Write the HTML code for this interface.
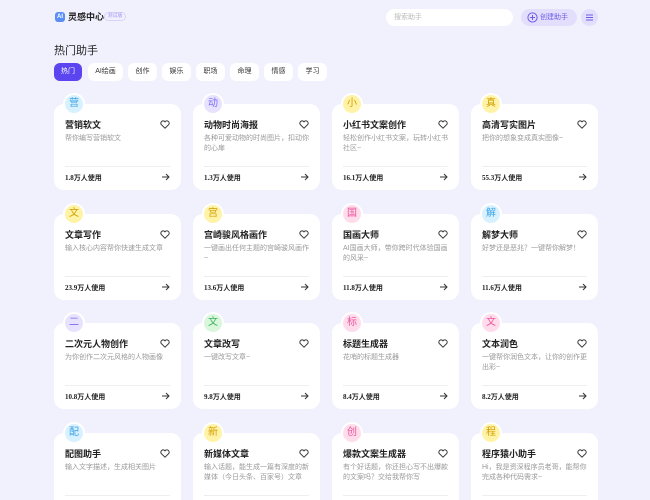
<!DOCTYPE html>
<html><head><meta charset="utf-8"><style>
*{margin:0;padding:0;box-sizing:border-box}
html{width:650px;height:500px;overflow:hidden}
body{width:650px;height:500px;overflow:hidden;background:#f1f0fd;font-family:"Liberation Sans","Noto Sans CJK SC",sans-serif;position:relative;color:#222}
.abs{position:absolute}
.tab{position:absolute;top:63px;height:18px;border-radius:6px;background:#fff;font-size:7px;line-height:18px;text-align:center;color:#333}
.card{position:absolute;width:127px;height:86px;background:#fff;border-radius:10px}
.ic{position:absolute;left:9px;top:-11px;width:22px;height:22px;border-radius:50%;border:2px solid #fff;font-size:10px;line-height:18px;text-align:center}
.t{position:absolute;left:11px;top:15px;font-size:9px;line-height:12px;font-weight:bold;color:#222}
.d{position:absolute;left:11px;top:30px;width:107px;font-size:7px;line-height:10px;color:#999}
.hr{position:absolute;left:11px;right:11px;top:62px;border-top:1px solid #eee}
.u{position:absolute;left:11px;top:69px;font-size:7px;font-weight:bold;color:#222;font-family:"Liberation Serif","Noto Sans CJK SC",serif}
.hrt{position:absolute;right:11px;top:16px}
.ar{position:absolute;right:11px;top:69px}
.b{background:#d8f1ff;color:#3ba3e6}.p{background:#e7e3ff;color:#7a6bf0}.y{background:#fff3a8;color:#d29c00}.k{background:#ffdcec;color:#e8559a}.g{background:#daf6dd;color:#3bb35a}
</style></head><body>
<div class="abs" style="left:55px;top:12px;width:10px;height:10px;border-radius:3px;background:#5b8df6;color:#fff;font-size:6px;font-weight:bold;line-height:10px;text-align:center">AI</div>
<div class="abs" style="left:68px;top:12px;font-size:9px;line-height:11px;font-weight:bold;color:#222">灵感中心</div>
<div class="abs" style="left:104px;top:12px;width:22px;height:9px;border:1px solid #d8d3fb;border-radius:5px;font-size:5px;line-height:7px;text-align:center;color:#a79cf0">测试版</div>
<div class="abs" style="left:386px;top:9px;width:127px;height:17px;border-radius:9px;background:#fff;font-size:7px;line-height:17px;padding-left:8px;color:#bbb">搜索助手</div>
<div class="abs" style="left:521px;top:9px;width:56px;height:17px;border-radius:9px;background:#e2defc;font-size:7px;line-height:17px;padding-left:19px;color:#6c5ce7">创建助手</div>
<svg class="abs" style="left:527px;top:12px" width="11" height="11" viewBox="0 0 11 11"><circle cx="5.5" cy="5.5" r="4.6" fill="none" stroke="#6c5ce7" stroke-width="1"/><path d="M5.5 3v5M3 5.5h5" stroke="#6c5ce7" stroke-width="1"/></svg>
<div class="abs" style="left:581px;top:9px;width:17px;height:17px;border-radius:50%;background:#e2defc"></div>
<svg class="abs" style="left:585px;top:13px" width="9" height="9" viewBox="0 0 9 9"><path d="M1 2h7M1 4.5h7M1 7h7" stroke="#6c5ce7" stroke-width="1"/></svg>
<div class="abs" style="left:54px;top:44px;font-size:11px;line-height:14px;color:#222">热门助手</div>
<div class="tab" style="left:54px;width:28px;background:#5b45f0;color:#fff">热门</div>
<div class="tab" style="left:88px;width:35px">AI绘画</div>
<div class="tab" style="left:128px;width:29px">创作</div>
<div class="tab" style="left:162px;width:29px">娱乐</div>
<div class="tab" style="left:196px;width:29px">职场</div>
<div class="tab" style="left:230px;width:29px">命理</div>
<div class="tab" style="left:264px;width:29px">情感</div>
<div class="tab" style="left:298px;width:29px">学习</div>
<div id="c"></div>
<script>
var D=[["营","b","营销软文","帮你编写营销软文","1.8万人使用"],["动","p","动物时尚海报","各种可爱动物的时尚图片，扣动你的心扉","1.3万人使用"],["小","y","小红书文案创作","轻松创作小红书文案，玩转小红书社区~","16.1万人使用"],["真","y","高清写实图片","把你的想象变成真实图像~","55.3万人使用"],
["文","y","文章写作","输入核心内容帮你快速生成文章","23.9万人使用"],["宫","y","宫崎骏风格画作","一键画出任何主题的宫崎骏风画作~","13.6万人使用"],["国","k","国画大师","AI国画大师，带你跨时代体验国画的风采~","11.8万人使用"],["解","b","解梦大师","好梦还是恶兆？一键帮你解梦！","11.6万人使用"],
["二","p","二次元人物创作","为你创作二次元风格的人物画像","10.8万人使用"],["文","g","文章改写","一键改写文章~","9.8万人使用"],["标","k","标题生成器","花哨的标题生成器","8.4万人使用"],["文","k","文本润色","一键帮你润色文本，让你的创作更出彩~","8.2万人使用"],
["配","b","配图助手","输入文字描述，生成相关图片",""],["新","y","新媒体文章","输入话题，能生成一篇有深度的新媒体（今日头条、百家号）文章",""],["创","k","爆款文案生成器","有个好话题，你还担心写不出爆款的文案吗？交给我帮你写",""],["程","y","程序猿小助手","Hi，我是资深程序员老哥，能帮你完成各种代码需求~",""]];
var h='',tops=[104,214,323,433];
D.forEach(function(d,i){var x=54+(i%4)*139,y=tops[Math.floor(i/4)];
h+='<div class="card" style="left:'+x+'px;top:'+y+'px"><div class="ic '+d[1]+'">'+d[0]+'</div><div class="t">'+d[2]+'</div>'+
'<svg class="hrt" width="10" height="9" viewBox="0 0 10 9"><path d="M5 8.2L1.3 4.6A2.1 2.1 0 0 1 5 1.8 2.1 2.1 0 0 1 8.7 4.6Z" fill="none" stroke="#333" stroke-width="1"/></svg>'+
'<div class="d">'+d[3]+'</div><div class="hr"></div><div class="u">'+d[4]+'</div>'+
'<svg class="ar" width="9" height="8" viewBox="0 0 9 8"><path d="M1 4h7M5 1l3 3-3 3" fill="none" stroke="#333" stroke-width="1"/></svg></div>';});
document.getElementById('c').innerHTML=h;
</script>
</body></html>
